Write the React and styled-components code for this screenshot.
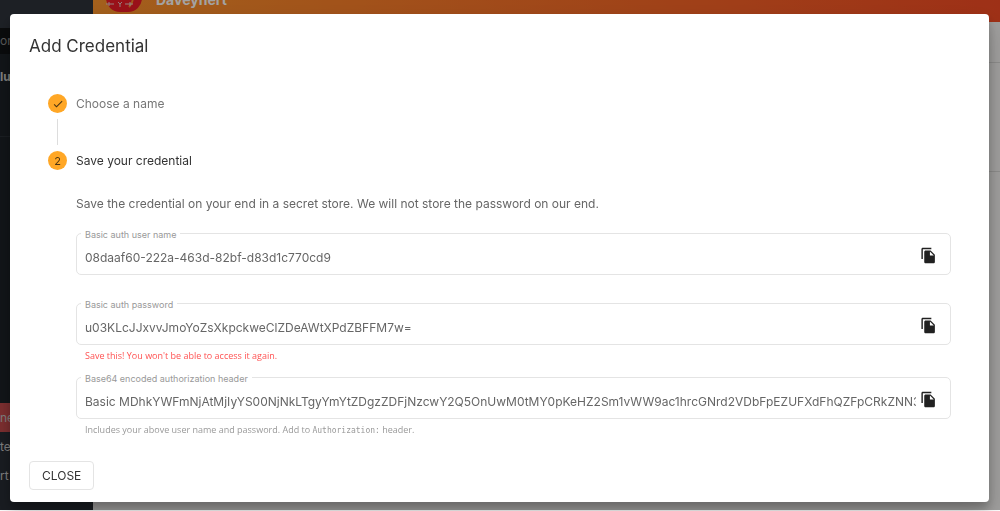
import React from 'react';
import styled, { createGlobalStyle } from 'styled-components';

const GlobalStyle = createGlobalStyle`
	* {
		box-sizing: border-box;
	}

	body {
		margin: 0;
		overflow: hidden;
		background: #ffffff;
		font-family: Inter, "Open Sans", sans-serif;
		font-size: 12px;
	}

	button, input {
		font-family: inherit;
	}
`;

const fields = [
	{
		id: 'auth-user',
		label: 'Basic auth user name',
		value: '08daaf60-222a-463d-82bf-d83d1c770cd9',
	},
	{
		id: 'auth-password',
		label: 'Basic auth password',
		value: 'u03KLcJJxvvJmoYoZsXkpckweClZDeAWtXPdZBFFM7w=',
		warning: true,
		hint: "Save this! You won't be able to access it again.",
	},
	{
		id: 'auth-header',
		label: 'Base64 encoded authorization header',
		value: 'Basic MDhkYWFmNjAtMjIyYS00NjNkLTgyYmYtZDgzZDFjNzcwY2Q5OnUwM0tMY0pKeHZ2Sm1vWW9ac1hrcGNrd2VDbFpEZUFXdFhQZFpCRkZNN3c9',
		hint: <>Includes your above user name and password. Add to <code>Authorization:</code> header.</>,
	},
];

const CheckIcon = () => (
	<svg width="12" height="12" viewBox="0 0 24 24" aria-hidden="true">
		<path fill="currentColor" d="M21 7 9 19l-5.500-5.500 1.410-1.410L9 16.170 19.590 5.590 21 7z" />
	</svg>
);

const CopyIcon = () => (
	<svg width="17" height="17" viewBox="0 0 24 24" aria-hidden="true">
		<path
			fill="currentColor"
			d="M16 1H4c-1.100 0-2 .9-2 2v14h2V3h12V1zm-1 4 6 6v10c0 1.100-.9 2-2 2H7.990C6.890 23 6 22.100 6 21l.01-14c0-1.100.89-2 1.990-2h7zm-1 7h5.500L14 6.500V12z"
		/>
	</svg>
);

const LogoIcon = () => (
	<svg width="36" height="36" viewBox="0 0 36 36" aria-hidden="true">
		<rect width="36" height="36" rx="14" fill="#f01c28" />
		<path d="M24 18c4 4 3 9-1 13" fill="none" stroke="#ff8a2c" strokeWidth="2" />
		<path d="M0 28h8M19 28h8M3 26v4M24 26v4M12 26l2 2 2-2M14 28v3" fill="none" stroke="#e8c8c8" strokeWidth="1" />
	</svg>
);

const CredentialField = ({ id, label, value, hint, warning }) => (
	<Field>
		<Outline>
			<FieldLabel htmlFor={id}>{label}</FieldLabel>
			<FieldInput id={id} value={value} readOnly />
			<CopyButton type="button" aria-label={`Copy ${label}`}>
				<CopyIcon />
			</CopyButton>
		</Outline>
		{hint && <Hint $warning={warning}>{hint}</Hint>}
	</Field>
);

const App = () => {
	return (
		<>
			<GlobalStyle />
			<Page>
				<Sidebar>
					<SideHead />
					<SideSearch>or</SideSearch>
					<SideTitle>lu</SideTitle>
					<SideFill />
					<SideItem $active>ne</SideItem>
					<SideItem>te</SideItem>
					<SideItem>rt</SideItem>
					<SideFooter />
				</Sidebar>
				<Main>
					<Header>
						<LogoIcon />
						<HeaderName>Daveyhert</HeaderName>
					</Header>
					<Row $height={41} />
					<Row $height={109} />
				</Main>
			</Page>
			<Backdrop>
				<Dialog role="dialog" aria-labelledby="dialog-title">
					<DialogTitle id="dialog-title">Add Credential</DialogTitle>
					<Stepper>
						<Step>
							<StepMark><CheckIcon /></StepMark>
							<StepLabel>Choose a name</StepLabel>
						</Step>
						<Connector />
						<Step>
							<StepMark>2</StepMark>
							<StepLabel $active>Save your credential</StepLabel>
						</Step>
						<StepContent>
							<Intro>
								Save the credential on your end in a secret store. We will not store the password on our end.
							</Intro>
							{fields.map((field) => (
								<CredentialField key={field.id} {...field} />
							))}
						</StepContent>
					</Stepper>
					<CloseButton type="button">CLOSE</CloseButton>
				</Dialog>
			</Backdrop>
		</>
	);
};

const Page = styled.div`
	display: flex;
	height: calc(100vh - 1px);
	overflow: hidden;
	background: #f8f7f5;
`;

const Sidebar = styled.nav`
	display: flex;
	flex-direction: column;
	flex: 0 0 93px;
	overflow: hidden;
	background: #1c2227;
	color: #c8c8c8;
`;

const SideHead = styled.div`
	flex: 0 0 28px;
	background: #2e333b;
`;

const SideSearch = styled.div`
	flex: 0 0 26px;
	line-height: 26px;
	background: #101214;
	color: #8c8c8c;
`;

const SideTitle = styled.div`
	padding-top: 14px;
	line-height: 18px;
	font-weight: 700;
`;

const SideFill = styled.div`
	flex: 1;
	margin-top: 50px;
	border-top: 1px solid #2a3036;
`;

const SideItem = styled.div`
	flex: 0 0 29px;
	line-height: 29px;
	background: ${(props) => (props.$active ? '#c44a4c' : '#282d35')};
`;

const SideFooter = styled.div`
	flex: 0 0 20px;
	background: #282d35;
`;

const Main = styled.main`
	flex: 1;
`;

const Header = styled.header`
	display: flex;
	align-items: flex-end;
	gap: 14px;
	height: 22px;
	padding: 0 13px 10px;
	background: linear-gradient(90deg, #ff962c, #f84c24);
`;

const HeaderName = styled.div`
	line-height: 24px;
	font-size: 14px;
	font-weight: 700;
	color: #ffffff;
`;

const Row = styled.div`
	height: ${(props) => props.$height}px;
	border-bottom: 1px solid #dcdbd9;
`;

const Backdrop = styled.div`
	position: fixed;
	inset: 0 0 1px;
	padding: 14px 11px 8px 10px;
	background: rgba(0, 0, 0, 0.36);
`;

const Dialog = styled.section`
	height: 100%;
	padding: 22px 19px 12px;
	border-radius: 4px;
	background: #ffffff;
	box-shadow: 0 6px 9px rgba(0, 0, 0, 0.2), 0 12px 24px rgba(0, 0, 0, 0.2);
	color: #333333;
`;

const DialogTitle = styled.h1`
	margin: 0;
	font-size: 17px;
	line-height: 20px;
	font-weight: 400;
`;

const Stepper = styled.div`
	padding: 38px 19px 23px;
`;

const Step = styled.div`
	display: flex;
	align-items: center;
	gap: 9px;
`;

const StepMark = styled.span`
	display: flex;
	align-items: center;
	justify-content: center;
	width: 19px;
	height: 19px;
	border-radius: 50%;
	background: #ffa726;
	font-size: 11px;
	color: #4a3412;
`;

const StepLabel = styled.span`
	line-height: 19px;
	color: ${(props) => (props.$active ? '#333333' : '#777777')};
`;

const Connector = styled.div`
	height: 26px;
	margin: 6px 9px;
	border-left: 1px solid #dddddd;
`;

const StepContent = styled.div`
	display: flex;
	flex-direction: column;
	gap: 14px;
	padding: 24px 0 0 28px;
`;

const Intro = styled.p`
	margin: 0 0 5px;
	line-height: 20px;
	color: #666666;
`;

const Field = styled.div`
	min-height: 56px;
`;

const Outline = styled.div`
	position: relative;
	display: flex;
	align-items: center;
	height: 42px;
	padding: 6px 13px 0 8px;
	border: 1px solid #e4e4e4;
	border-radius: 5px;
`;

const FieldLabel = styled.label`
	position: absolute;
	top: -5px;
	left: 4px;
	padding: 0 4px;
	background: #ffffff;
	font-size: 9px;
	line-height: 12px;
	color: #999999;
`;

const FieldInput = styled.input`
	flex: 1;
	min-width: 0;
	height: 20px;
	padding: 0;
	border: 0;
	outline: 0;
	background: none;
	font-size: 12px;
	color: #666666;
`;

const CopyButton = styled.button`
	display: flex;
	margin: 0 0 3px 4px;
	padding: 0;
	border: 0;
	background: none;
	color: #212121;
	cursor: pointer;
`;

const Hint = styled.p`
	margin: 4px 0 0;
	padding-left: 9px;
	font-family: "Open Sans", sans-serif;
	font-size: 9px;
	line-height: 14px;
	color: ${(props) => (props.$warning ? '#ff5252' : '#999999')};

	code {
		font-family: "DejaVu Sans Mono", monospace;
		font-size: 8px;
	}
`;

const CloseButton = styled.button`
	display: block;
	height: 29px;
	padding: 0 12px;
	border: 1px solid #e4e4e4;
	border-radius: 4px;
	background: #ffffff;
	font-size: 12px;
	color: #333333;
	cursor: pointer;
`;

export default App;
